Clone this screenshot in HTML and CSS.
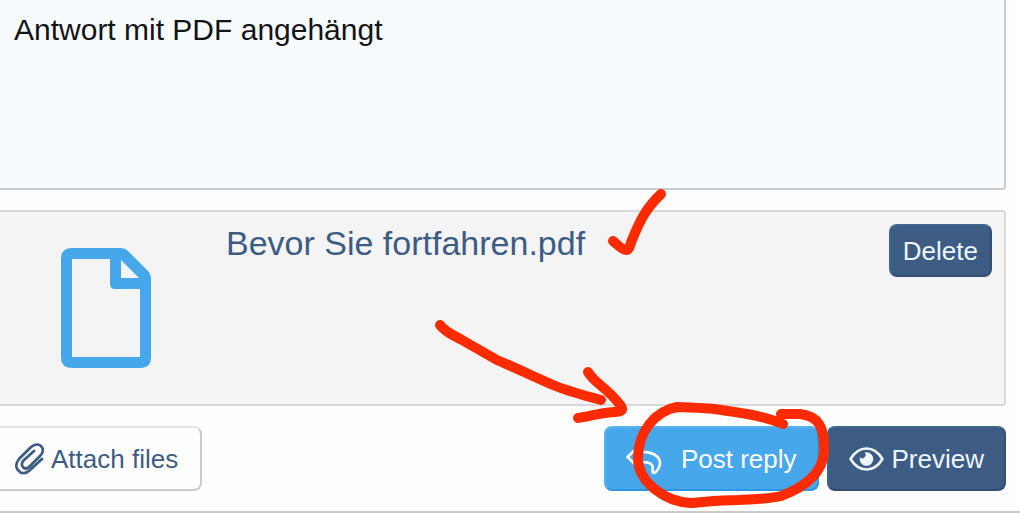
FILE: index.html
```html
<!DOCTYPE html>
<html lang="de">
<head>
    <meta charset="UTF-8">
    <meta name="viewport" content="width=device-width, initial-scale=1.0">
    <title>Post reply</title>
    <link rel="stylesheet" href="styles.css">
</head>
<body>
    <div class="page">
        <form class="reply-form">
            <textarea class="editor" aria-label="Reply" spellcheck="false">Antwort mit PDF angehängt</textarea>

            <div class="attachment">
                <div class="file-icon">
                    <svg width="90" height="120" viewBox="0 0 90 120">
                        <path fill="#47a7eb" fill-rule="evenodd" d="M11 0H60Q64 0 67 3L87 23Q90 26 90 30V109Q90 120 79 120H11Q0 120 0 109V11Q0 0 11 0ZM11 11V109H79V41H54Q49 41 49 36V11ZM60 12V30H78Z"/>
                    </svg>
                </div>
                <a class="file-name" href="#">Bevor Sie fortfahren.pdf</a>
                <button type="button" class="button button-dark button-small">Delete</button>
            </div>

            <div class="actions">
                <button type="button" class="button button-attach">
                    <svg width="30" height="32" viewBox="0 0 30 32" fill="none" stroke="#3d5c84" stroke-width="2.800" stroke-linecap="round">
                        <path d="M27 16L15 27C11 31 6 31 4 28C0 25 1 20 4 16L16 4C20 1 24 1 26 3C29 6 28 10 25 13L14 24C12 26 9 26 8 24C6 22 7 19 9 17L19 8"/>
                    </svg>
                    Attach files
                </button>
                <div class="submit-group">
                    <button type="submit" class="button button-primary">
                        <svg width="35" height="28" viewBox="0 0 35 28" fill="none" stroke="#fff" stroke-width="2.600" stroke-linejoin="round">
                            <path d="M1.500 12L12 2V7C26 6 34 11 34 18C34 22 31 27 28 28C25 28 28 23 26 20C24 17 19 17 12 17V22Z"/>
                        </svg>
                        Post reply
                    </button>
                    <button type="button" class="button button-dark button-preview">
                        <svg width="35" height="24" viewBox="0 0 35 24">
                            <path fill="none" stroke="#edf6fd" stroke-width="2.600" stroke-linejoin="round" d="M1.500 12Q8 1.500 17.500 1.500T33.500 12Q27 22.500 17.500 22.500T1.500 12Z"/>
                            <path fill="#edf6fd" d="M17.500 5.200A6.800 6.800 0 1 1 10.900 10.300A3.300 3.300 0 1 0 15.500 5.500Z"/>
                        </svg>
                        Preview
                    </button>
                </div>
            </div>
        </form>

        <!-- hand-drawn marks over the form -->
        <svg class="marks" width="1020" height="514" viewBox="0 0 1020 514">
            <path d="M613 241C618 245 622 250 626 250C630 250 630 244 632 240C640 220 647 207 661 194"/>
            <path d="M440 325C445 332 453 335 462 340L497 360C520 370 537 378 553 385C567 391 583 395 601 400"/>
            <path d="M588 372C595 384 607 387 621 406C624 411 620 412 614 412C600 413 590 416 578 418"/>
            <path d="M783 424C762 415 740 413 715 409C700 408 687 407 677 407C655 411 638 432 638 458C638 482 665 502 691 503C705 502 720 500 738 500C755 499 770 499 781 496C808 486 822 472 824 453C825 426 818 416 800 414H781"/>
        </svg>
    </div>
</body>
</html>
```

FILE: styles.css
```css
* {
    box-sizing: border-box;
}
body {
    margin: 0;
    background: #fefefe;
    color: #141414;
    font-family: "Liberation Sans", Arial, sans-serif;
}
.page {
    position: relative;
    padding-bottom: 20px;
    border-bottom: 2px solid #cbcbcb;
}
.reply-form {
    display: flex;
    flex-direction: column;
    gap: 20px;
    margin-right: 14px;
}
.editor {
    display: block;
    width: 100%;
    height: 190px;
    margin: 0;
    padding: 12px 14px;
    border: 2px solid #cbcbcb;
    border-width: 0 2px 2px 0;
    border-radius: 0 0 4px 0;
    background: #f7fbff;
    color: inherit;
    font: inherit;
    font-size: 30px;
    line-height: 36px;
    resize: none;
    outline: none;
}
.attachment {
    display: flex;
    align-items: flex-start;
    min-height: 196px;
    padding: 12px 12px 12px 0;
    border: 2px solid #d8d8d8;
    border-left: none;
    border-radius: 0 4px 4px 0;
    background: #f4f4f4;
}
.file-icon {
    display: flex;
    justify-content: center;
    width: 212px;
    margin-right: 14px;
    padding-top: 24px;
}
.file-name {
    flex: 1;
    color: #3d5c84;
    font-size: 34px;
    line-height: 38px;
    text-decoration: none;
}
.actions,
.submit-group {
    display: flex;
    justify-content: space-between;
    gap: 8px;
}
.button {
    display: flex;
    align-items: center;
    height: 65px;
    padding: 0 20px;
    border: 2px solid;
    border-radius: 8px;
    font: inherit;
    font-size: 26px;
    line-height: 30px;
    white-space: nowrap;
    cursor: pointer;
}
.button svg {
    overflow: visible;
}
.button-attach {
    gap: 6px;
    padding: 0 22px 0 15px;
    border-color: #e3e3e3 #cbcbcb #cbcbcb #e3e3e3;
    border-left: none;
    border-radius: 0 8px 8px 0;
    background: #fefefe;
    color: #3d5c84;
}
.button-primary {
    gap: 20px;
    border-color: #5ab1ee #2e97e4 #2e97e4 #5ab1ee;
    background: #47a7eb;
    color: #fff;
}
.button-dark {
    border-color: #41658f #344f72 #344f72 #41658f;
    background: #3d5c84;
    color: #edf6fd;
}
.button-preview {
    gap: 8px;
}
.button-small {
    height: 53px;
    padding: 0 12px;
}
.marks {
    position: absolute;
    top: 0;
    left: 0;
    fill: none;
    stroke: #ff2b00;
    stroke-width: 10px;
    stroke-linecap: round;
    stroke-linejoin: round;
    pointer-events: none;
}
```
